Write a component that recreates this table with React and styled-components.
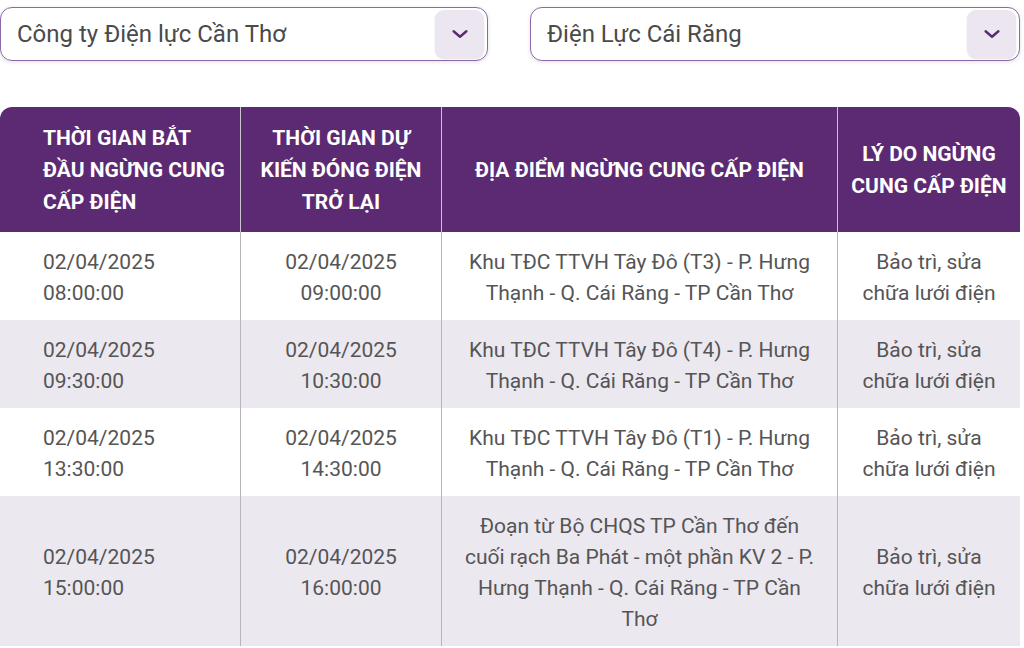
import React from 'react';
import styled, { createGlobalStyle } from 'styled-components';

const GlobalStyle = createGlobalStyle`
  body {
    margin: 0;
    background: #ffffff;
    font-family: Roboto, "Noto Sans", "Liberation Sans", sans-serif;
  }
`;

// start of styled components
const Page = styled.div`
  width: 1020px;
  padding-top: 7px;
`;

const Filters = styled.div`
  display: flex;
  justify-content: space-between;
  margin-bottom: 46px;
`;

const SelectBox = styled.div`
  box-sizing: border-box;
  width: ${p => p.width}px;
  height: 54px;
  display: flex;
  align-items: center;
  justify-content: space-between;
  padding: 0 3px 0 16px;
  border: 1px solid #8d68ab;
  border-radius: 12px;
  background: #fff;
  box-shadow: 0 1px 4px rgba(0, 0, 0, 0.12);
`;

const SelectText = styled.span`
  font-size: 24px;
  color: #4a4a4a;
`;

const ArrowButton = styled.div`
  width: 49px;
  height: 48px;
  border-radius: 9px;
  background: #ece6f1;
  display: flex;
  align-items: center;
  justify-content: center;
  box-shadow: 0 1px 2px rgba(0, 0, 0, 0.12);
`;

const Table = styled.table`
  width: 1020px;
  border-collapse: separate;
  border-spacing: 0;
  table-layout: fixed;
`;

const Th = styled.th`
  background: #5c2a72;
  color: #fff;
  font-size: 21px;
  font-weight: 700;
  line-height: 32px;
  height: 125px;
  box-sizing: border-box;
  padding: ${p => (p.first ? '0 12px 0 43px' : '0 12px')};
  text-align: ${p => (p.first ? 'left' : 'center')};
  border-left: ${p => (p.first ? 'none' : '1px solid #c9c3cf')};
  &:first-child { border-top-left-radius: 12px; }
  &:last-child { border-top-right-radius: 12px; }
`;

const Tr = styled.tr`
  background: ${p => (p.striped ? '#ece8f0' : '#ffffff')};
`;

const Td = styled.td`
  font-size: 21px;
  color: #555;
  line-height: 31px;
  padding: ${p => (p.first ? '15px 10px 11px 43px' : '15px 16px 11px')};
  text-align: ${p => (p.first ? 'left' : 'center')};
  border-left: ${p => (p.first ? 'none' : '1px solid #b9b5bd')};
  vertical-align: middle;
`;

const Chevron = () => (
  <svg width="22" height="22" viewBox="0 0 24 24" fill="none">
    <path d="M5 9l7 6 7-6" stroke="#5c2a72" strokeWidth="2.6" strokeLinecap="round" strokeLinejoin="round" />
  </svg>
);

const rows = [
  { start: ['02/04/2025', '08:00:00'], end: ['02/04/2025', '09:00:00'], place: 'Khu TĐC TTVH Tây Đô (T3) - P. Hưng Thạnh - Q. Cái Răng - TP Cần Thơ' },
  { start: ['02/04/2025', '09:30:00'], end: ['02/04/2025', '10:30:00'], place: 'Khu TĐC TTVH Tây Đô (T4) - P. Hưng Thạnh - Q. Cái Răng - TP Cần Thơ' },
  { start: ['02/04/2025', '13:30:00'], end: ['02/04/2025', '14:30:00'], place: 'Khu TĐC TTVH Tây Đô (T1) - P. Hưng Thạnh - Q. Cái Răng - TP Cần Thơ' },
  { start: ['02/04/2025', '15:00:00'], end: ['02/04/2025', '16:00:00'], place: 'Đoạn từ Bộ CHQS TP Cần Thơ đến cuối rạch Ba Phát - một phần KV 2 - P. Hưng Thạnh - Q. Cái Răng - TP Cần Thơ' },
];

const App = () => (
  <Page>
    <GlobalStyle />
    <Filters>
      <SelectBox width={488}>
        <SelectText>Công ty Điện lực Cần Thơ</SelectText>
        <ArrowButton><Chevron /></ArrowButton>
      </SelectBox>
      <SelectBox width={490}>
        <SelectText>Điện Lực Cái Răng</SelectText>
        <ArrowButton><Chevron /></ArrowButton>
      </SelectBox>
    </Filters>

    <Table>
      <colgroup>
        <col style={{ width: 240 }} />
        <col style={{ width: 201 }} />
        <col style={{ width: 396 }} />
        <col style={{ width: 183 }} />
      </colgroup>
      <thead>
        <tr>
          <Th first>THỜI GIAN BẮT ĐẦU NGỪNG CUNG CẤP ĐIỆN</Th>
          <Th>THỜI GIAN DỰ KIẾN ĐÓNG ĐIỆN TRỞ LẠI</Th>
          <Th>ĐỊA ĐIỂM NGỪNG CUNG CẤP ĐIỆN</Th>
          <Th>LÝ DO NGỪNG CUNG CẤP ĐIỆN</Th>
        </tr>
      </thead>
      <tbody>
        {rows.map((r, i) => (
          <Tr key={i} striped={i % 2 === 1}>
            <Td first>{r.start[0]}<br />{r.start[1]}</Td>
            <Td>{r.end[0]}<br />{r.end[1]}</Td>
            <Td>{r.place}</Td>
            <Td>Bảo trì, sửa chữa lưới điện</Td>
          </Tr>
        ))}
      </tbody>
    </Table>
  </Page>
);

export default App;
